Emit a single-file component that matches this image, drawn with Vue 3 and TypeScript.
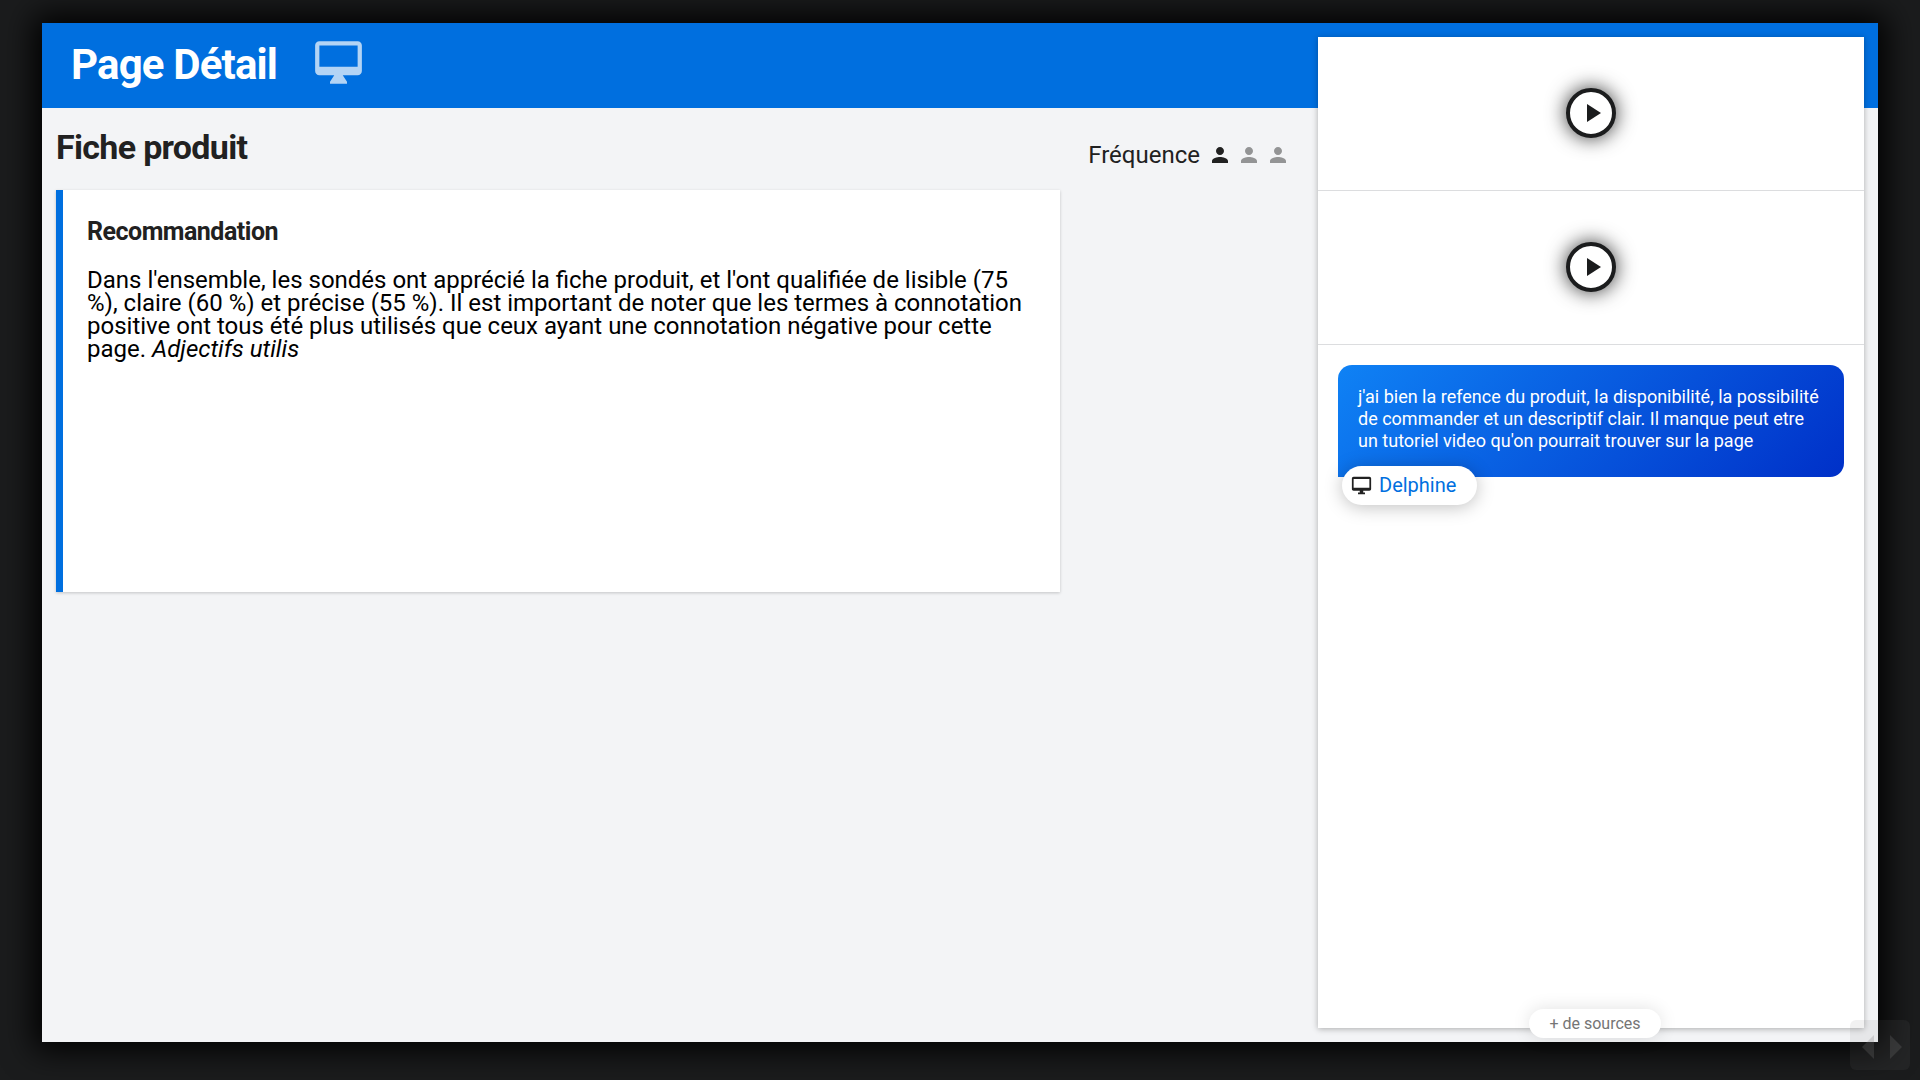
<script setup lang="ts">
import { ref } from 'vue'

const clips = ref([1, 2])
const frequency = ref(1)
const desktopPath =
  'M21 2H3c-1.1 0-2 .9-2 2v12c0 1.1.9 2 2 2h7l-2 3v1h8v-1l-2-3h7c1.1 0 2-.9 2-2V4c0-1.1-.9-2-2-2zm0 12H3V4h18v10z'
</script>

<template>
  <div class="stage">
    <main class="slide">
      <header class="banner">
        <h1>Page Détail</h1>
        <svg class="device" viewBox="0 0 24 24" aria-hidden="true"><path :d="desktopPath" /></svg>
      </header>

      <section class="content">
        <div class="heading">
          <h2>Fiche produit</h2>
          <div class="frequency">
            <span>Fréquence</span>
            <div class="people">
              <svg v-for="n in 3" :key="n" :class="{ off: n > frequency }" viewBox="0 0 24 24" aria-hidden="true">
                <path d="M12 12c2.210 0 4-1.790 4-4s-1.790-4-4-4-4 1.790-4 4 1.790 4 4 4zm0 2c-2.670 0-8 1.340-8 4v2h16v-2c0-2.660-5.330-4-8-4z" />
              </svg>
            </div>
          </div>
        </div>
        <article class="card">
          <h3>Recommandation</h3>
          <p>
            Dans l'ensemble, les sondés ont apprécié la fiche produit, et l'ont qualifiée de lisible (75 %), claire
            (60 %) et précise (55 %). Il est important de noter que les termes à connotation positive ont tous été plus
            utilisés que ceux ayant une connotation négative pour cette page. <em>Adjectifs utilis</em>
          </p>
        </article>
      </section>

      <aside class="sources">
        <div v-for="clip in clips" :key="clip" class="clip">
          <button type="button" class="play" aria-label="Lire">
            <svg viewBox="0 0 14 18" aria-hidden="true"><path d="M0 0l14 9-14 9z" /></svg>
          </button>
        </div>
        <figure class="quote">
          <blockquote>
            j'ai bien la refence du produit, la disponibilité, la possibilité de commander et un descriptif clair. Il
            manque peut etre un tutoriel video qu'on pourrait trouver sur la page
          </blockquote>
          <figcaption>
            <svg viewBox="0 0 24 24" aria-hidden="true">
              <path d="M21 2H3c-1.1 0-2 .9-2 2v12c0 1.1.9 2 2 2h7v2H8v2h8v-2h-2v-2h7c1.100 0 2-.9 2-2V4c0-1.100-.9-2-2-2zm0 12.500H3V4.500h18v10z" />
            </svg>
            <span>Delphine</span>
          </figcaption>
        </figure>
        <button type="button" class="more">+ de sources</button>
      </aside>
    </main>

    <nav class="pager">
      <button type="button" aria-label="Précédent">
        <svg viewBox="0 0 12 24" aria-hidden="true"><path d="M12 0v24L0 12z" /></svg>
      </button>
      <button type="button" aria-label="Suivant">
        <svg viewBox="0 0 12 24" aria-hidden="true"><path d="M0 0v24l12-12z" /></svg>
      </button>
    </nav>
  </div>
</template>

<style>
body {
  background: #1b1c1d;
}
</style>

<style scoped>
.stage {
  box-sizing: border-box;
  display: flex;
  min-height: 100vh;
  padding: 23px 42px 38px;
  font-family: Roboto, 'Liberation Sans', sans-serif;
  color: #212121;
}
h1,
h2,
h3,
p,
figure,
blockquote {
  margin: 0;
}
h1,
h2,
h3 {
  letter-spacing: -0.02em;
}
button {
  border: 0;
  font-family: inherit;
  cursor: pointer;
}
svg {
  display: block;
  fill: currentColor;
}
.slide {
  flex: 1;
  display: grid;
  grid-template-columns: 1fr 546px;
  grid-template-rows: 85px 1fr;
  padding-right: 14px;
  background: #f3f4f6;
  box-shadow: 0 0 30px 8px #000;
}
.banner {
  grid-area: 1 / 1 / 2 / 3;
  display: flex;
  align-items: center;
  gap: 36px;
  margin-right: -14px;
  padding: 0 29px 2px;
  box-sizing: border-box;
  background: #006fdf;
  color: #fff;
}
h1 {
  font-size: 42px;
  line-height: 48px;
}
.device {
  width: 51px;
  height: 51px;
  margin-bottom: 4px;
  opacity: 0.7;
}
.content {
  grid-area: 2 / 1 / 3 / 2;
  padding: 14px;
}
.heading {
  display: flex;
  justify-content: space-between;
  align-items: center;
  height: 50px;
  margin-bottom: 18px;
  padding-right: 14px;
}
h2 {
  font-size: 34px;
  line-height: 40px;
}
.frequency {
  display: flex;
  align-items: center;
  gap: 8px;
  padding-top: 15px;
  font-size: 24px;
  line-height: 28px;
}
.people {
  display: flex;
  gap: 5px;
}
.people svg {
  width: 24px;
  height: 24px;
}
.people .off {
  opacity: 0.45;
}
.card {
  box-sizing: border-box;
  min-height: 402px;
  margin-right: 244px;
  padding: 28px 24px;
  border-left: 7px solid #006fdf;
  background: #fff;
  box-shadow: 0 1px 3px rgba(0, 0, 0, 0.2);
}
h3 {
  margin-bottom: 23px;
  font-size: 25px;
  line-height: 28px;
}
.card p {
  font-size: 24px;
  line-height: 23px;
  color: #000;
}
.sources {
  grid-area: 1 / 2 / 3 / 3;
  display: flex;
  flex-direction: column;
  margin: 14px 0;
  background: #fff;
  box-shadow: 0 1px 6px rgba(0, 0, 0, 0.3);
}
.clip {
  box-sizing: border-box;
  display: flex;
  align-items: center;
  justify-content: center;
  height: 154px;
  padding-bottom: 1px;
  border-bottom: 1px solid #dcdddf;
}
.play {
  display: flex;
  align-items: center;
  justify-content: center;
  width: 50px;
  height: 50px;
  padding: 0 0 0 6px;
  border: 4px solid #1b1c1d;
  border-radius: 50%;
  background: #fff;
  color: #1b1c1d;
  box-shadow: 0 0 20px rgba(0, 0, 0, 0.8);
}
.play svg {
  width: 14px;
  height: 18px;
}
.quote {
  margin: 20px;
}
blockquote {
  padding: 21px 20px 25px;
  border-radius: 14px 14px 14px 0;
  background: linear-gradient(135deg, #0f82f5, #0030c8);
  color: #fff;
  font-size: 18px;
  line-height: 22px;
}
figcaption {
  display: flex;
  align-items: center;
  gap: 7px;
  width: fit-content;
  height: 39px;
  box-sizing: border-box;
  margin: -11px 0 0 4px;
  padding: 0 21px 1px 9px;
  border-radius: 20px;
  background: #fff;
  box-shadow: 0 2px 18px rgba(0, 0, 0, 0.25);
  font-size: 20px;
  line-height: 24px;
  position: relative;
}
figcaption svg {
  width: 21px;
  height: 21px;
}
figcaption span {
  color: #006fdf;
}
.more {
  align-self: center;
  height: 29px;
  margin: auto 0 -10px 8px;
  padding: 0 20px;
  border-radius: 15px;
  background: #fff;
  color: #757575;
  font-size: 16px;
  line-height: 20px;
  box-shadow: 0 0 18px rgba(0, 0, 0, 0.12);
}
.pager {
  position: fixed;
  right: 10px;
  bottom: 10px;
  box-sizing: border-box;
  display: flex;
  align-items: center;
  justify-content: center;
  gap: 16px;
  width: 60px;
  height: 50px;
  padding: 4px 0 0 4px;
  border-radius: 6px;
  background: rgba(120, 120, 120, 0.1);
}
.pager button {
  padding: 0;
  background: none;
  color: rgba(120, 120, 120, 0.25);
}
.pager svg {
  width: 12px;
  height: 24px;
}
</style>
